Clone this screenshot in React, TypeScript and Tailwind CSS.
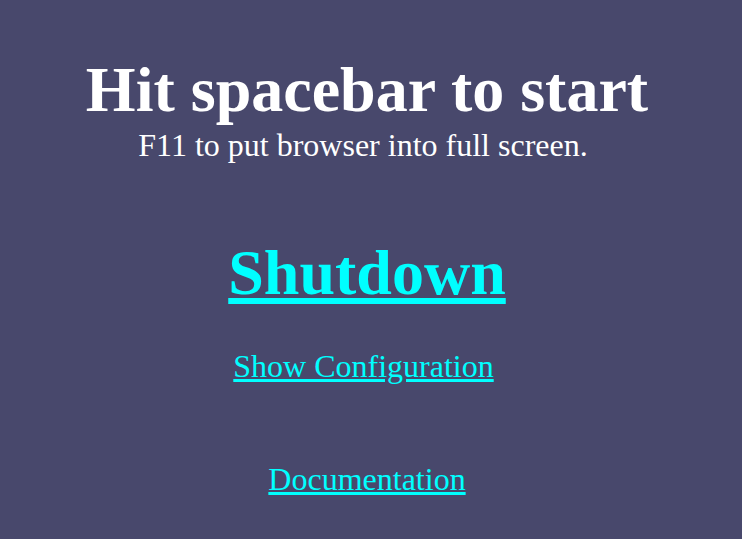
import React from "react";

export default function App() {
  return (
    <div
      className="w-[742px] h-[539px] bg-[#48486c] text-white overflow-hidden"
      style={{ fontFamily: '"Liberation Serif", "Times New Roman", serif' }}
    >
      <div className="w-[734px] flex flex-col items-center text-center">
        <h1 className="mt-[58px] text-[64px] leading-[64px] font-bold whitespace-nowrap">
          Hit spacebar to start
        </h1>
        <p className="mt-[7px] text-[32px] leading-[32px] pr-[8px] whitespace-nowrap">
          F11 to put browser into full screen.
        </p>
        <a
          href="#"
          className="mt-[80px] text-[64px] leading-[64px] font-bold text-[#00ffff] underline whitespace-nowrap"
        >
          Shutdown
        </a>
        <div className="mt-[45px] pr-[7px]">
          <a
            href="#"
            className="text-[32px] leading-[32px] text-[#00ffff] underline whitespace-nowrap"
          >
            Show Configuration
          </a>
        </div>
        <div className="mt-[79px] leading-[32px]">
          <a
            href="#"
            className="text-[32px] leading-[32px] text-[#00ffff] underline whitespace-nowrap"
          >
            Documentation
          </a>
        </div>
      </div>
    </div>
  );
}
